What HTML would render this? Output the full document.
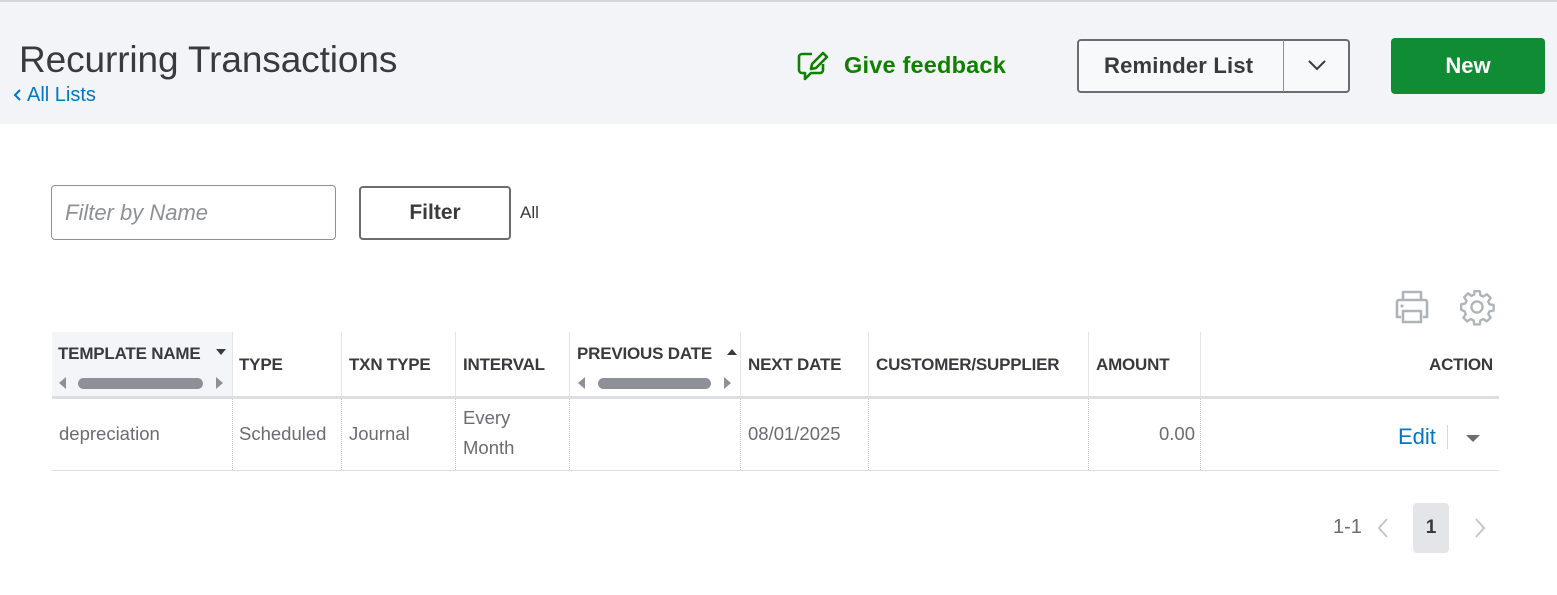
<!DOCTYPE html>
<html><head><meta charset="utf-8"><style>
*{margin:0;padding:0;box-sizing:border-box}
body{width:1557px;height:595px;background:#fff;font-family:"Liberation Sans",sans-serif;position:relative;overflow:hidden;color:#393a3d}
.a{position:absolute;white-space:nowrap}
.hdr{position:absolute;left:0;top:0;width:1557px;height:124px;background:#f3f4f8;border-top:2px solid #d4d7dc}
.th{position:absolute;top:332px;height:64px;font-size:17px;font-weight:bold;color:#393a3d;border-right:1px solid #e3e5e8;letter-spacing:-0.2px}
.td{position:absolute;top:399px;height:71px;font-size:18.5px;color:#6b6c72;border-right:1px dotted #c4c6ca}
.bar{position:absolute;height:11px;background:#8d9096;border-radius:6px}
.tri{position:absolute;width:0;height:0;border-top:6px solid transparent;border-bottom:6px solid transparent}
</style></head><body>
<div class="hdr"></div>
<div class="a" style="left:19px;top:39px;font-size:37px;color:#393a3d;letter-spacing:-0.1px">Recurring Transactions</div>
<div class="a" style="left:13px;top:84px;font-size:20px;color:#0077c5"><svg width="10" height="14" viewBox="0 0 10 14" style="vertical-align:-1px;margin-right:4px"><path d="M7 2L2 7l5 5" stroke="#0077c5" stroke-width="2" fill="none"/></svg>All Lists</div>
<svg class="a" style="left:796px;top:50px" width="34" height="34" viewBox="0 0 34 34"><path d="M16 4H6a3 3 0 0 0-3 3v13a3 3 0 0 0 3 3h3v6l6-6h9a3 3 0 0 0 3-3v-6" stroke="#108000" stroke-width="2.6" fill="none" stroke-linejoin="round"/><path d="M27 3l4 4-11 11-5 1 1-5z" stroke="#108000" stroke-width="2.6" fill="none" stroke-linejoin="round"/></svg>
<div class="a" style="left:844px;top:52px;font-size:23.5px;font-weight:bold;color:#108000;letter-spacing:0.2px">Give feedback</div>
<div class="a" style="left:1077px;top:39px;width:273px;height:54px;border:2px solid #6b6c72;border-radius:4px;background:#f8f9fa"></div>
<div class="a" style="left:1283px;top:40px;width:1px;height:52px;background:#8d9096"></div>
<div class="a" style="left:1104px;top:53px;font-size:22px;font-weight:bold;color:#393a3d;letter-spacing:0.2px">Reminder List</div>
<svg class="a" style="left:1307px;top:58px" width="20" height="14"><path d="M2 3l8 8 8-8" stroke="#393a3d" stroke-width="2" fill="none"/></svg>
<div class="a" style="left:1391px;top:38px;width:154px;height:56px;background:#108c34;border-radius:4px;color:#fff;font-size:22px;font-weight:bold;text-align:center;line-height:56px">New</div>

<div class="a" style="left:51px;top:185px;width:285px;height:55px;border:1px solid #8d9096;border-radius:4px"></div>
<div class="a" style="left:65px;top:200px;font-size:22px;font-style:italic;color:#8d9096">Filter by Name</div>
<div class="a" style="left:359px;top:186px;width:152px;height:54px;border:2px solid #6b6c72;border-radius:4px;font-size:21px;font-weight:bold;text-align:center;line-height:50px">Filter</div>
<div class="a" style="left:520px;top:203px;font-size:17px">All</div>

<svg class="a" style="left:1393px;top:289px" width="38" height="36" viewBox="0 0 38 36"><path d="M10 11V3h18v8M8 28H4V13a2 2 0 0 1 2-2h26a2 2 0 0 1 2 2v15h-4M10 22h18v11H10z" stroke="#b0b3b8" stroke-width="2.6" fill="none" stroke-linejoin="round"/><circle cx="9" cy="17" r="1.6" fill="#b0b3b8"/></svg>
<svg class="a" style="left:1458px;top:288px" width="38" height="38" viewBox="0 0 24 24"><path d="M12 8.5a3.5 3.5 0 1 0 0 7 3.5 3.5 0 0 0 0-7zM10.3 2h3.4l.5 2.6 1.8.8 2.2-1.5 2.4 2.4-1.5 2.2.8 1.8 2.6.5v3.4l-2.6.5-.8 1.8 1.5 2.2-2.4 2.4-2.200-1.5-1.8.8-.5 2.6h-3.4l-.5-2.6-1.8-.8-2.2 1.5-2.4-2.4 1.5-2.2-.8-1.8L2 13.7v-3.4l2.6-.5.8-1.8-1.5-2.2 2.4-2.4 2.2 1.5 1.8-.8z" stroke="#b0b3b8" stroke-width="1.5" fill="none" stroke-linejoin="round"/></svg>

<div class="a" style="left:52px;top:332px;width:181px;height:64px;background:#f4f5f8"></div>
<div class="th" style="left:52px;width:181px"><span class="a" style="left:6px;top:12px">TEMPLATE NAME</span><svg class="a" style="left:164px;top:17px" width="10" height="6"><path d="M0 0h10L5 6z" fill="#393a3d"/></svg></div>
<div class="tri" style="left:59px;top:377px;border-right:7px solid #8d9096"></div><div class="bar" style="left:78px;top:378px;width:125px"></div><div class="tri" style="left:216px;top:377px;border-left:7px solid #8d9096"></div>
<div class="th" style="left:233px;width:109px"><span class="a" style="left:6px;top:23px">TYPE</span></div>
<div class="th" style="left:342px;width:114px"><span class="a" style="left:7px;top:23px">TXN TYPE</span></div>
<div class="th" style="left:456px;width:114px"><span class="a" style="left:7px;top:23px">INTERVAL</span></div>
<div class="th" style="left:570px;width:171px"><span class="a" style="left:7px;top:12px">PREVIOUS DATE</span><svg class="a" style="left:157px;top:17px" width="10" height="6"><path d="M0 6h10L5 0z" fill="#393a3d"/></svg></div>
<div class="tri" style="left:578px;top:377px;border-right:7px solid #8d9096"></div><div class="bar" style="left:598px;top:378px;width:113px"></div><div class="tri" style="left:724px;top:377px;border-left:7px solid #8d9096"></div>
<div class="th" style="left:741px;width:128px"><span class="a" style="left:7px;top:23px">NEXT DATE</span></div>
<div class="th" style="left:869px;width:220px"><span class="a" style="left:7px;top:23px">CUSTOMER/SUPPLIER</span></div>
<div class="th" style="left:1089px;width:112px"><span class="a" style="left:7px;top:23px">AMOUNT</span></div>
<div class="th" style="left:1201px;width:298px;border-right:none"><span class="a" style="right:6px;top:23px">ACTION</span></div>
<div class="a" style="left:52px;top:396px;width:1447px;height:3px;background:#dcdee2"></div>

<div class="td" style="left:52px;width:181px"><span class="a" style="left:7px;top:24px">depreciation</span></div>
<div class="td" style="left:233px;width:109px"><span class="a" style="left:6px;top:24px">Scheduled</span></div>
<div class="td" style="left:342px;width:114px"><span class="a" style="left:7px;top:24px">Journal</span></div>
<div class="td" style="left:456px;width:114px"><span class="a" style="left:7px;top:4px;line-height:30px">Every<br>Month</span></div>
<div class="td" style="left:570px;width:171px"></div>
<div class="td" style="left:741px;width:128px"><span class="a" style="left:7px;top:24px">08/01/2025</span></div>
<div class="td" style="left:869px;width:220px"></div>
<div class="td" style="left:1089px;width:112px"><span class="a" style="right:5px;top:24px">0.00</span></div>
<div class="a" style="left:1398px;top:424px;font-size:22px;color:#0077c5">Edit</div>
<div class="a" style="left:1447px;top:425px;width:1px;height:24px;background:#d4d7dc"></div>
<svg class="a" style="left:1466px;top:435px" width="14" height="8"><path d="M0 0h14L7 7z" fill="#6b6c72"/></svg>
<div class="a" style="left:52px;top:470px;width:1447px;height:1px;background:#dcdee2"></div>

<div class="a" style="left:1333px;top:516px;font-size:20px;color:#6b6c72">1-1</div>
<svg class="a" style="left:1377px;top:517px" width="12" height="22"><path d="M10 2L2 11l8 9" stroke="#c4c6ca" stroke-width="2" fill="none"/></svg>
<div class="a" style="left:1413px;top:503px;width:36px;height:50px;background:#e3e5e8;border-radius:4px;font-size:19px;font-weight:bold;text-align:center;line-height:50px">1</div>
<svg class="a" style="left:1474px;top:517px" width="12" height="22"><path d="M2 2l8 9-8 9" stroke="#c4c6ca" stroke-width="2" fill="none"/></svg>
</body></html>
